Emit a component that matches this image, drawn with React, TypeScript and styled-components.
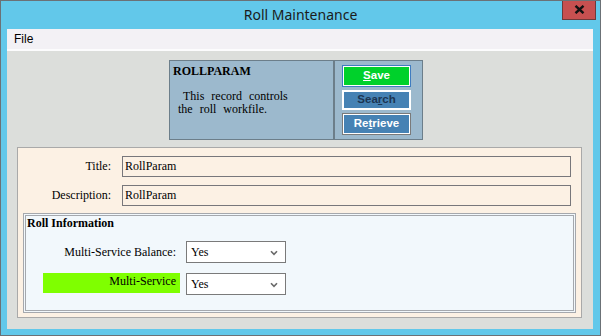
import styled, { createGlobalStyle } from 'styled-components';

const GlobalStyle = createGlobalStyle`
    body {
        margin: 0;
        font-family: 'Liberation Serif', 'Times New Roman', serif;
    }
`;

interface ActionButtonProps {
    $bg: string;
    $color: string;
    $outer: string;
    $h: number;
}

const Chevron = () => (
    <svg width='8' height='6' viewBox='0 0 8 6'>
        <path d='M1 1.2 L4 4.4 L7 1.2' fill='none' stroke='#6a6a6a' strokeWidth='1.6' />
    </svg>
);

const CloseGlyph = () => (
    <svg width='11' height='9' viewBox='0 0 11 9'>
        <path d='M1.5 0.8 L9.5 8.2 M9.5 0.8 L1.5 8.2' stroke='#111' strokeWidth='2.4' />
    </svg>
);

const App = () => {
    return (
        <>
            <GlobalStyle />
            <Window>
                <TitleBar>
                    <span />
                    <TitleText>Roll Maintenance</TitleText>
                    <CloseButton>
                        <CloseGlyph />
                    </CloseButton>
                </TitleBar>
                <Frame>
                    <Client>
                        <MenuBar>
                            <MenuItem>File</MenuItem>
                        </MenuBar>
                        <Content>
                            <Header>
                                <Info>
                                    <InfoTitle>ROLLPARAM</InfoTitle>
                                    <InfoText>
                                        This record controls
                                        <br />
                                        the roll workfile.
                                    </InfoText>
                                </Info>
                                <Actions>
                                    <ActionButton $bg='#00d12b' $color='#ffffff' $outer='#3f7cc0' $h={22}>
                                        <u>S</u>ave
                                    </ActionButton>
                                    <ActionButton $bg='#4682b4' $color='#1c3552' $outer='#ffffff' $h={20}>
                                        Sea<u>r</u>ch
                                    </ActionButton>
                                    <ActionButton $bg='#4682b4' $color='#ffffff' $outer='#7a7a7a' $h={22}>
                                        Re<u>t</u>rieve
                                    </ActionButton>
                                </Actions>
                            </Header>
                            <FormPanel>
                                <FieldRow>
                                    <FieldLabel>Title:</FieldLabel>
                                    <TextInput defaultValue='RollParam' />
                                </FieldRow>
                                <FieldRow>
                                    <FieldLabel>Description:</FieldLabel>
                                    <TextInput defaultValue='RollParam' />
                                </FieldRow>
                                <GroupBox>
                                    <GroupTitle>Roll Information</GroupTitle>
                                    <SelectRow>
                                        <SelectLabel>Multi-Service Balance:</SelectLabel>
                                        <SelectBox>
                                            Yes
                                            <Chevron />
                                        </SelectBox>
                                    </SelectRow>
                                    <SelectRow>
                                        <SelectLabel $highlight>Multi-Service</SelectLabel>
                                        <SelectBox>
                                            Yes
                                            <Chevron />
                                        </SelectBox>
                                    </SelectRow>
                                </GroupBox>
                            </FormPanel>
                        </Content>
                    </Client>
                </Frame>
            </Window>
        </>
    );
};

const Window = styled.div`
    width: 601px;
    height: 336px;
    box-sizing: border-box;
    border: 1px solid #6b7176;
    background-color: #62c8ea;
    display: flex;
    flex-direction: column;
`;

const TitleBar = styled.div`
    height: 28px;
    display: grid;
    grid-template-columns: 1fr auto 1fr;
    align-items: start;
`;

const TitleText = styled.div`
    font-family: 'Noto Sans', 'Open Sans', sans-serif;
    font-size: 14px;
    line-height: 28px;
    color: #1b1b1b;
`;

const CloseButton = styled.div`
    justify-self: end;
    margin-right: 4px;
    width: 34px;
    height: 19px;
    box-sizing: border-box;
    background-color: #c75050;
    border: 1px solid #6e3a3a;
    border-top: none;
    display: flex;
    align-items: center;
    justify-content: center;
    padding-bottom: 2px;
`;

const Frame = styled.div`
    padding: 0 7px 6px 6px;
`;

const Client = styled.div`
    height: 300px;
    display: flex;
    flex-direction: column;
    background-color: #dcdedb;
`;

const MenuBar = styled.div`
    height: 20px;
    background-color: #f3f1f5;
    border-bottom: 2px solid #fcfcfd;
    padding-left: 7px;
    display: flex;
    align-items: center;
`;

const MenuItem = styled.div`
    font-family: 'Liberation Sans', Arial, sans-serif;
    font-size: 12px;
    color: #000;
`;

const Content = styled.div`
    flex: 1;
    padding: 9px 11px 11px 10px;
    display: flex;
    flex-direction: column;
`;

const Header = styled.div`
    margin-left: 152px;
    width: 254px;
    height: 80px;
    box-sizing: border-box;
    display: flex;
    border: 1px solid #6c7e8a;
    background-color: #9cb9cd;
`;

const Info = styled.div`
    width: 165px;
    border-right: 2px solid #6c7e8a;
    padding: 3px 0 0 3px;
    box-sizing: border-box;
`;

const InfoTitle = styled.div`
    font-weight: bold;
    font-size: 12px;
    line-height: 14px;
    color: #000;
`;

const InfoText = styled.div`
    margin-top: 12px;
    padding-left: 5px;
    text-indent: 5px;
    font-size: 12px;
    line-height: 13px;
    word-spacing: 4px;
    color: #000;
`;

const Actions = styled.div`
    flex: 1;
    display: flex;
    flex-direction: column;
    gap: 3px;
    padding: 4px 0 0 7px;
`;

const ActionButton = styled.button<ActionButtonProps>`
    width: 69px;
    height: ${(p) => p.$h}px;
    padding: 0;
    box-sizing: border-box;
    border: 1px solid ${(p) => p.$outer};
    box-shadow: inset 0 0 0 1px #ffffff;
    background-color: ${(p) => p.$bg};
    color: ${(p) => p.$color};
    font-family: 'Liberation Sans', Arial, sans-serif;
    font-weight: bold;
    font-size: 11.5px;
    line-height: 1;
`;

const FormPanel = styled.div`
    margin-top: 7px;
    flex: 1;
    box-sizing: border-box;
    border: 1px solid #a9a9a9;
    background-color: #fcf1e4;
    padding: 8px 5px 4px 5px;
    display: flex;
    flex-direction: column;
    gap: 8px;
`;

const FieldRow = styled.div`
    display: flex;
    align-items: center;
    gap: 11px;
    height: 21px;
    padding-right: 5px;
`;

const FieldLabel = styled.div`
    width: 88px;
    text-align: right;
    font-size: 12px;
    color: #000;
`;

const TextInput = styled.input`
    flex: 1;
    height: 21px;
    box-sizing: border-box;
    border: 1px solid #78777b;
    background-color: transparent;
    padding: 0 2px;
    font-family: 'Liberation Serif', 'Times New Roman', serif;
    font-size: 12px;
    color: #000;
    outline: none;
`;

const GroupBox = styled.div`
    margin-top: -1px;
    flex: 1;
    border: 3px double #a5a8ad;
    background-color: #f2f8fc;
    padding-left: 1px;
`;

const GroupTitle = styled.div`
    font-weight: bold;
    font-size: 12px;
    line-height: 14px;
    color: #000;
    margin-bottom: 11px;
`;

const SelectRow = styled.div`
    display: flex;
    align-items: flex-start;
    gap: 6px;
    padding-left: 16px;
    margin-bottom: 10px;
`;

const SelectLabel = styled.div<{ $highlight?: boolean }>`
    width: 137px;
    height: ${(p) => (p.$highlight ? '20px' : '22px')};
    box-sizing: border-box;
    padding-right: 4px;
    text-align: right;
    font-size: 12px;
    line-height: ${(p) => (p.$highlight ? '14px' : '22px')};
    padding-top: ${(p) => (p.$highlight ? '1px' : '0')};
    background-color: ${(p) => (p.$highlight ? '#7fff00' : 'transparent')};
    color: #000;
`;

const SelectBox = styled.div`
    width: 100px;
    height: 22px;
    box-sizing: border-box;
    border: 1px solid #7a7a7a;
    background-color: #ffffff;
    display: flex;
    align-items: center;
    justify-content: space-between;
    padding: 1px 7px 0 4px;
    font-size: 12px;
    color: #000;
`;

export default App;
